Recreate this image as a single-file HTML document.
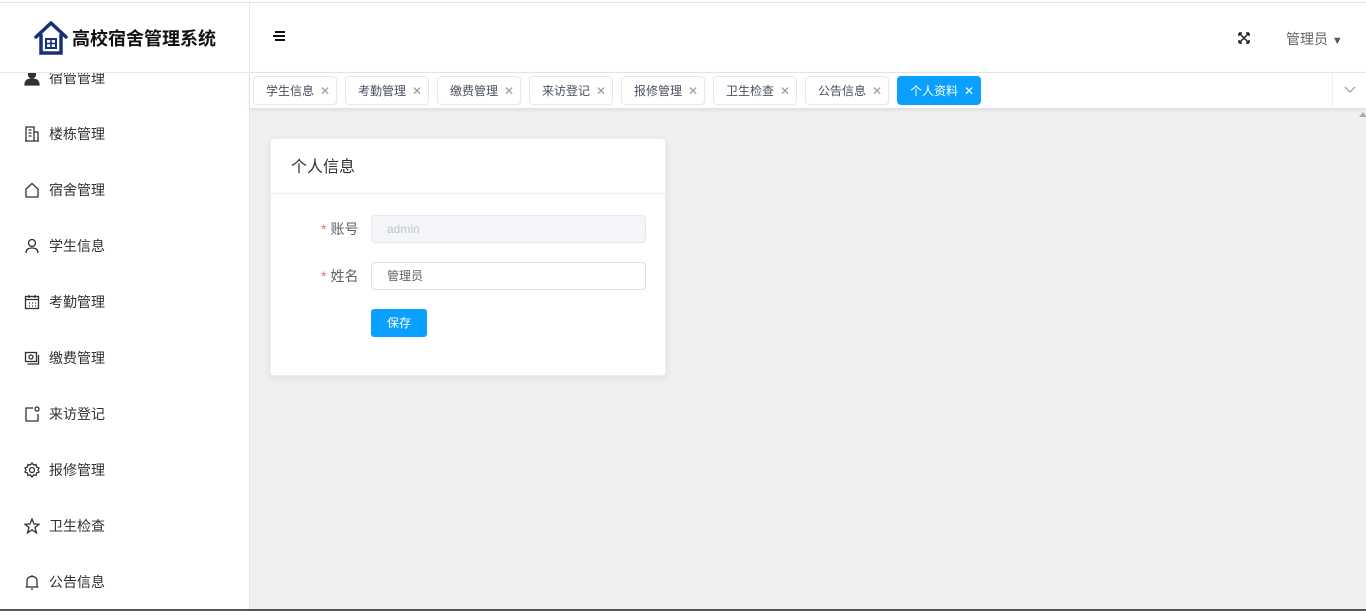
<!DOCTYPE html>
<html><head><meta charset="utf-8"><style>
*{margin:0;padding:0;box-sizing:border-box}
body{width:1366px;height:611px;overflow:hidden;background:#f0f0f0;font-family:"Liberation Sans","Noto Sans CJK SC",sans-serif;position:relative;color:#303133}
.top{position:absolute;left:0;top:0;width:1366px;height:3px;background:#fff;border-bottom:1px solid #e0e0e0}
.side{position:absolute;left:0;top:3px;width:250px;height:606px;background:#fff;border-right:1px solid #e6e6e6;overflow:hidden}
.logo{height:70px;border-bottom:1px solid #e6e6e6;display:flex;align-items:center;padding-left:33px;font-size:18px;font-weight:bold;color:#111;background:#fff;position:relative;z-index:2}
.logo svg{margin-right:3px}
.mi{position:absolute;left:0;height:56px;width:249px;display:flex;align-items:center;padding-left:24px;font-size:14px;color:#303133}
.mi svg{width:16px;height:16px;margin-right:9px;fill:none;stroke:#303133;stroke-width:1.3}
.hdr{position:absolute;left:250px;top:3px;width:1116px;height:70px;background:#fff;border-bottom:1px solid #e6e6e6}
.tabs{position:absolute;left:250px;top:73px;width:1116px;height:35px;background:#fff;box-shadow:0 2px 4px rgba(0,0,0,.08)}
.tab{position:absolute;top:3px;height:29px;width:84px;border:1px solid #e4e7ed;border-radius:4px;font-size:12px;color:#495060;display:flex;align-items:center;padding-left:12px}
.tab span{margin-left:6px;color:#999;font-size:12px}
.tab.act{background:#0aa0ff;border-color:#0aa0ff;color:#fff}
.tab.act span{color:#fff}
.card{position:absolute;left:270px;top:138px;width:396px;height:238px;background:#fff;border:1px solid #ebeef5;border-radius:4px;box-shadow:0 2px 8px rgba(0,0,0,.08)}
.ch{height:55px;border-bottom:1px solid #ebeef5;padding:14px 20px;font-size:16px;color:#303133}
.lab{position:absolute;font-size:14px;color:#606266}
.lab b{color:#f56c6c;font-weight:normal;margin-right:4px}
.inp{position:absolute;left:100px;width:275px;height:28px;border:1px solid #dcdfe6;border-radius:4px;font-size:12px;padding-left:15px;line-height:26px}
</style></head><body>
<div class="top"></div>
<div class="side">
<div class="logo"><svg width="36" height="36" viewBox="0 0 36 36"><path d="M3 17 L18 3 L33 17" fill="none" stroke="#16307a" stroke-width="3.5" stroke-linejoin="round" stroke-linecap="round"/><path d="M8 14 V33 H28 V14" fill="none" stroke="#16307a" stroke-width="3.5"/><rect x="13" y="19" width="10" height="9" fill="none" stroke="#16307a" stroke-width="2"/><path d="M18 19V28M13 23.5H23" stroke="#16307a" stroke-width="1.6"/></svg>高校宿舍管理系统</div>
<div class="mi" style="top:47px"><svg viewBox="0 0 16 16"><circle cx="8" cy="4.5" r="3.5" fill="#303133"/><path d="M1 15 Q1 9 8 9 Q15 9 15 15Z" fill="#303133"/></svg>宿管管理</div>
<div class="mi" style="top:103px"><svg viewBox="0 0 16 16"><path d="M2 15V1h8v14M10 6h4v9M1 15h14M4.5 4h3M4.5 7h3M4.5 10h3"/></svg>楼栋管理</div>
<div class="mi" style="top:159px"><svg viewBox="0 0 16 16"><path d="M2 7L8 1.5 14 7V15H2Z"/></svg>宿舍管理</div>
<div class="mi" style="top:215px"><svg viewBox="0 0 16 16"><circle cx="8" cy="5" r="3.5"/><path d="M2 15Q2 10 8 10Q14 10 14 15"/></svg>学生信息</div>
<div class="mi" style="top:271px"><svg viewBox="0 0 16 16"><rect x="1.5" y="2.5" width="13" height="12"/><path d="M1.5 5.5h13M5 1v3M11 1v3M5 9h1M8 9h1M11 9h1M5 12h1M8 12h1M11 12h1"/></svg>考勤管理</div>
<div class="mi" style="top:327px"><svg viewBox="0 0 16 16"><rect x="1.5" y="2.5" width="11" height="9"/><circle cx="7" cy="7" r="2"/><path d="M14.5 5v9h-11"/></svg>缴费管理</div>
<div class="mi" style="top:383px"><svg viewBox="0 0 16 16"><path d="M9 2H2V15H14V8"/><circle cx="13" cy="3" r="2"/></svg>来访登记</div>
<div class="mi" style="top:439px"><svg viewBox="0 0 16 16"><path d="M8 1L9.5 3 12 2.5 12.5 5 15 6 14 8 15 10 12.5 11 12 13.5 9.5 13 8 15 6.5 13 4 13.5 3.5 11 1 10 2 8 1 6 3.5 5 4 2.5 6.5 3Z"/><circle cx="8" cy="8" r="2.5"/></svg>报修管理</div>
<div class="mi" style="top:495px"><svg viewBox="0 0 16 16"><path d="M8 1L10 6 15 6.2 11 9.5 12.5 14.8 8 11.8 3.5 14.8 5 9.5 1 6.2 6 6Z"/></svg>卫生检查</div>
<div class="mi" style="top:551px"><svg viewBox="0 0 16 16"><path d="M3 13V7Q3 2.5 8 2.5Q13 2.5 13 7V13M1.5 13h13M7 15h2M8 1v1.5"/></svg>公告信息</div>
</div>
<div class="hdr">
<div style="position:absolute;left:23px;top:28px;width:12px"><div style="height:2px;background:#111;margin-bottom:2px;margin-left:2px"></div><div style="height:2px;background:#111;margin-bottom:2px"></div><div style="height:2px;background:#111;margin-left:2px"></div></div>
<svg style="position:absolute;left:988px;top:29px" width="12" height="12" viewBox="0 0 12 12"><path d="M1 1l10 10M11 1L1 11M1 1h3M1 1v3M11 1h-3M11 1v3M1 11h3M1 11v-3M11 11h-3M11 11v-3" stroke="#222" stroke-width="1.5" fill="none"/></svg>
<div style="position:absolute;left:1036px;top:26px;font-size:14px;color:#606266">管理员 <span style="font-size:11px;color:#555">▼</span></div>
</div>
<div class="tabs">
<div class="tab" style="left:3px">学生信息<span>✕</span></div>
<div class="tab" style="left:95px">考勤管理<span>✕</span></div>
<div class="tab" style="left:187px">缴费管理<span>✕</span></div>
<div class="tab" style="left:279px">来访登记<span>✕</span></div>
<div class="tab" style="left:371px">报修管理<span>✕</span></div>
<div class="tab" style="left:463px">卫生检查<span>✕</span></div>
<div class="tab" style="left:555px">公告信息<span>✕</span></div>
<div class="tab act" style="left:647px">个人资料<span>✕</span></div>
<div style="position:absolute;left:1082px;top:0;width:34px;height:35px;border-left:1px solid #eee;background:#fff"><svg style="position:absolute;left:11px;top:13px" width="12" height="8" viewBox="0 0 12 8"><path d="M1 1l5 5 5-5" stroke="#8a9bb0" fill="none" stroke-width="1.2"/></svg></div>
</div>
<div style="position:absolute;left:1359px;top:112px;width:0;height:0;border-left:4px solid transparent;border-right:4px solid transparent;border-bottom:5px solid #aaa"></div>
<div class="card">
<div class="ch">个人信息</div>
<div class="lab" style="left:50px;top:80px"><b>*</b>账号</div>
<div class="inp" style="top:76px;background:#f3f5f8;color:#c0c4cc;border-color:#e4e7ed">admin</div>
<div class="lab" style="left:50px;top:127px"><b>*</b>姓名</div>
<div class="inp" style="top:123px;color:#606266">管理员</div>
<div style="position:absolute;left:100px;top:170px;width:56px;height:28px;background:#0aa0ff;border-radius:3px;color:#fff;font-size:12px;text-align:center;line-height:28px">保存</div>
</div>
<div style="position:absolute;left:0;top:609px;width:1366px;height:2px;background:#555"></div>
</body></html>
